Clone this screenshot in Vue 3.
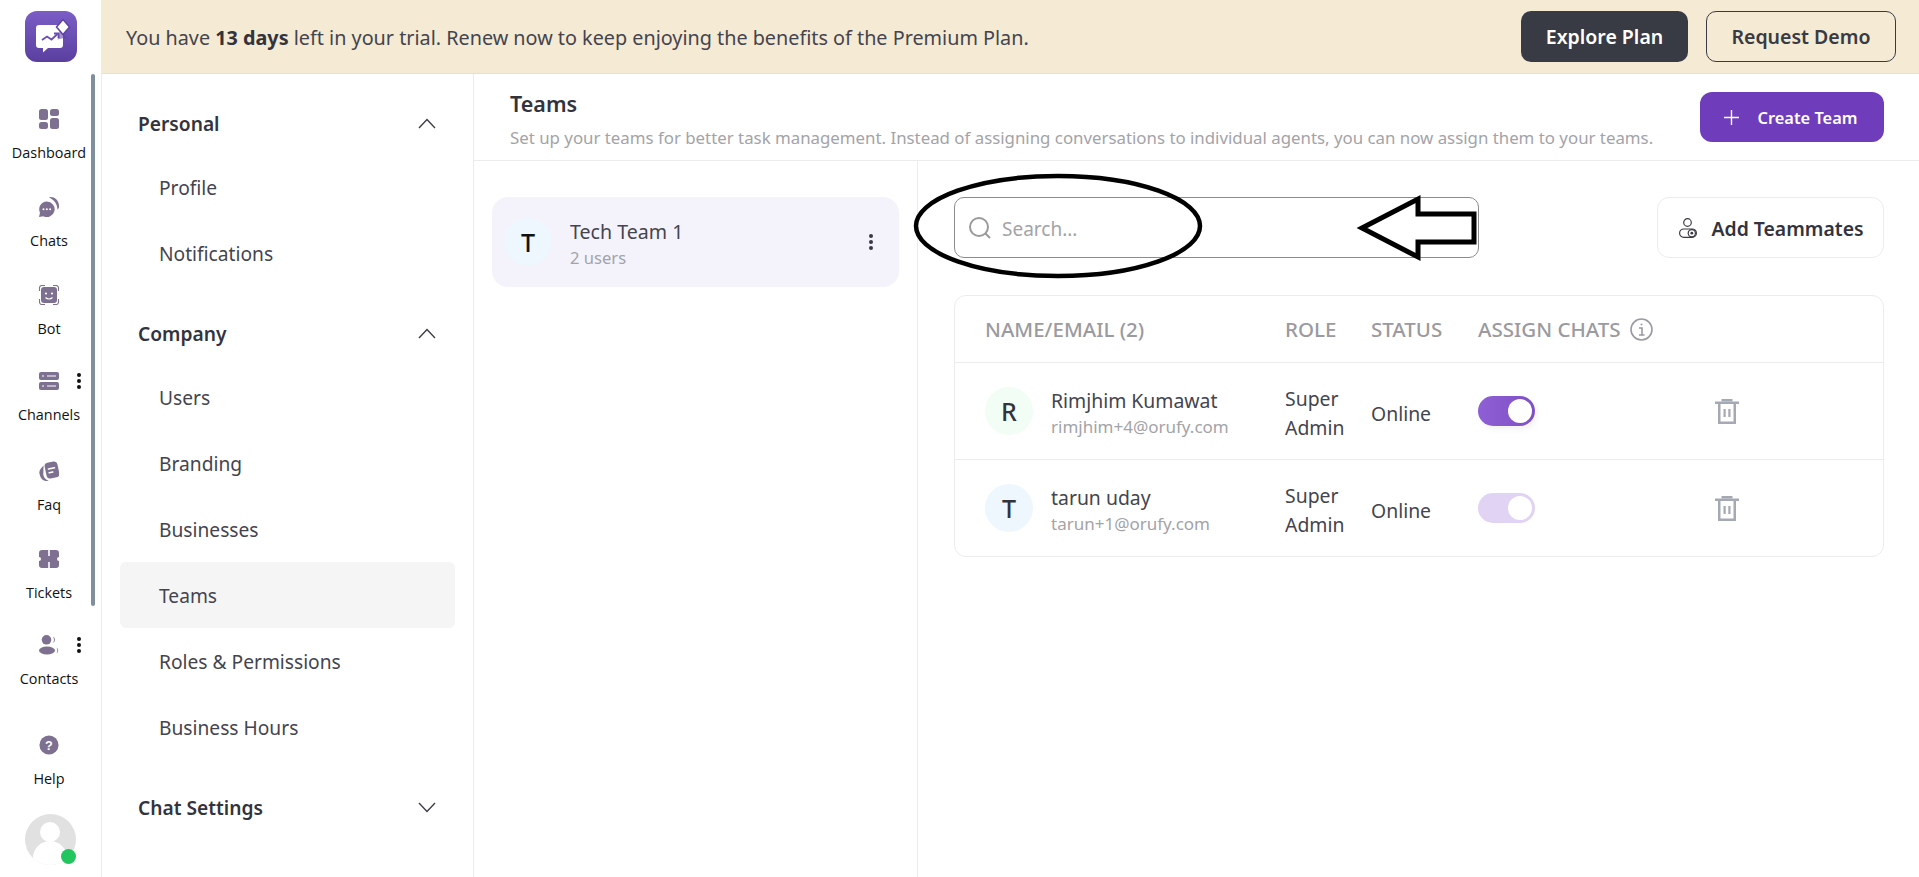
<script setup>
const navTop = [
  { label: 'Dashboard', h: 88, icon: 'dash' },
  { label: 'Chats', h: 88, icon: 'chat' },
  { label: 'Bot', h: 86, icon: 'bot' },
  { label: 'Channels', h: 90, icon: 'chan', more: true },
  { label: 'Faq', h: 88, icon: 'faq' },
  { label: 'Tickets', h: 86, icon: 'tick' },
  { label: 'Contacts', h: 100, icon: 'cont', more: true },
]
const sections = [
  { title: 'Personal', open: true, items: ['Profile', 'Notifications'] },
  { title: 'Company', open: true, items: ['Users', 'Branding', 'Businesses', 'Teams', 'Roles & Permissions', 'Business Hours'] },
  { title: 'Chat Settings', open: false, items: [] },
]
const members = [
  { initial: 'R', name: 'Rimjhim Kumawat', email: 'rimjhim+4@orufy.com', tone: 'green', on: true },
  { initial: 'T', name: 'tarun uday', email: 'tarun+1@orufy.com', tone: 'blue', on: false },
]
</script>

<template>
  <div class="page">
    <aside class="rail">
      <div class="logo">
        <svg width="52" height="51" viewBox="0 0 52 51">
          <path d="M14 14h21a3 3 0 0 1 3 3v17a3 3 0 0 1-3 3H23l-5 4.500V37h-4a3 3 0 0 1-3-3V17a3 3 0 0 1 3-3z" fill="#fff" />
          <path d="M17 29l5-3.500 4.500 3 6-5.500" fill="none" stroke="#6a4db4" stroke-width="1.800" />
          <path d="M29 22.500h4.500V27" fill="none" stroke="#6a4db4" stroke-width="1.800" />
          <path d="M35 19l6.500 7.500-9 2z" fill="#5a3f9f" opacity=".55" />
          <path d="M38 8.500l6.500 7.500-6.500 7.500-6.500-7.500z" fill="#fff" stroke="#5f43a8" stroke-width="1.500" />
        </svg>
      </div>
      <nav class="rail-nav">
        <div v-for="n in navTop" :key="n.label" class="rail-item" :style="{ height: n.h + 'px' }">
          <svg class="rail-icon" viewBox="2 2 20 20" fill="#7e7091">
            <g v-if="n.icon === 'dash'">
              <rect x="2" y="2" width="9" height="11" rx="2.500" /><rect x="13" y="2" width="9" height="7" rx="2.500" />
              <rect x="2" y="15" width="9" height="7" rx="2.500" /><rect x="13" y="11" width="9" height="11" rx="2.500" />
            </g>
            <g v-else-if="n.icon === 'chat'">
              <path d="M12 2.200c5.500-1 10.500 3.500 10 10-.2 1-.7 1.800-1.500 2.500C20.500 9.500 17.500 5 12 2.200z" />
              <path d="M9.800 6.500a7.800 7.800 0 1 1-3.400 14.800L2 22l1-4.200A7.800 7.800 0 0 1 9.800 6.500z" />
              <circle cx="6.500" cy="14.300" r="1" fill="#fff" /><circle cx="9.800" cy="14.300" r="1" fill="#fff" /><circle cx="13.100" cy="14.300" r="1" fill="#fff" />
            </g>
            <g v-else-if="n.icon === 'bot'">
              <rect x="4" y="4" width="16" height="16" rx="3" />
              <path d="M2.500 8V5a2.500 2.500 0 0 1 2.500-2.500h3M16 2.500h3A2.500 2.500 0 0 1 21.500 5v3M21.500 16v3a2.500 2.500 0 0 1-2.500 2.500h-3M8 21.500H5A2.500 2.500 0 0 1 2.500 19v-3" fill="none" stroke="#7e7091" stroke-width="1.100" />
              <circle cx="9" cy="10.500" r="1.100" fill="#fff" /><circle cx="15" cy="10.500" r="1.100" fill="#fff" />
              <path d="M8.500 14.500c2 1.800 5 1.800 7 0" fill="none" stroke="#fff" stroke-width="1.200" />
            </g>
            <g v-else-if="n.icon === 'chan'">
              <rect x="2" y="3" width="20" height="8" rx="2" /><rect x="2" y="13" width="20" height="8" rx="2" />
              <path d="M5 7h2M10 7h9M5 17h2M10 17h9" stroke="#fff" stroke-width="1.200" />
            </g>
            <g v-else-if="n.icon === 'faq'">
              <rect x="8.500" y="3" width="13" height="16" rx="3.500" transform="rotate(-12 15 11)" />
              <path d="M6.500 6.500L3.500 10c-1 1.400-1.400 3-1 4.700l.7 2.600c.8 2.500 3 4.300 5.600 4.700l4 .5c-3.500-1.500-6-3.500-6.500-7z" />
              <path d="M11.500 10l6-1.300M12.200 13.800l3.600-.8" stroke="#fff" stroke-width="1.600" stroke-linecap="round" />
            </g>
            <g v-else-if="n.icon === 'tick'">
              <path d="M5 3h6.200v6h1.600V3H19a3 3 0 0 1 3 3v4a2 2 0 0 0 0 4v4a3 3 0 0 1-3 3h-6.200v-6h-1.600v6H5a3 3 0 0 1-3-3v-4a2 2 0 0 0 0-4V6a3 3 0 0 1 3-3z" />
            </g>
            <g v-else>
              <circle cx="9.500" cy="6.800" r="4.800" /><ellipse cx="10" cy="17.500" rx="8" ry="4" />
              <path d="M16 3.500a3.800 3.800 0 0 1 0 6.600 6.500 6.500 0 0 0 0-6.600zM19.500 14.500a3.500 3.500 0 0 1 0 6 6 6 0 0 0 0-6z" />
            </g>
          </svg>
          <svg v-if="n.more" class="kebab" width="6" height="18" viewBox="0 0 6 18" fill="#111">
            <circle cx="3" cy="3" r="2" /><circle cx="3" cy="9" r="2" /><circle cx="3" cy="15" r="2" />
          </svg>
          <span class="rail-label">{{ n.label }}</span>
        </div>
        <div class="rail-item help">
          <svg class="rail-icon" viewBox="0 0 22 22">
            <circle cx="11" cy="11" r="10.500" fill="#7e7091" />
            <text x="11" y="16" text-anchor="middle" font-size="14" font-weight="700" fill="#fff" font-family="'Liberation Sans', sans-serif">?</text>
          </svg>
          <span class="rail-label">Help</span>
        </div>
      </nav>
      <div class="me">
        <svg width="51" height="51" viewBox="0 0 51 51">
          <defs><clipPath id="clipMe"><circle cx="25.500" cy="25.500" r="25.500" /></clipPath></defs>
          <circle cx="25.500" cy="25.500" r="25.500" fill="#e1e1e1" />
          <g clip-path="url(#clipMe)" fill="#fff">
            <circle cx="25" cy="18" r="10" /><ellipse cx="25" cy="44" rx="17" ry="17" />
          </g>
        </svg>
        <span class="me-dot"></span>
      </div>
      <span class="rail-scroll"></span>
    </aside>

    <div class="right">
      <header class="banner">
        <p class="banner-text">You have <b>13 days</b> left in your trial. Renew now to keep enjoying the benefits of the Premium Plan.</p>
        <button class="btn-dark">Explore Plan</button>
        <button class="btn-outline">Request Demo</button>
      </header>

      <div class="work">
        <aside class="settings">
          <section v-for="s in sections" :key="s.title" class="set-sec">
            <div class="set-head">
              <span>{{ s.title }}</span>
              <svg width="18" height="11" viewBox="0 0 18 11" fill="none" stroke="#3a3a44" stroke-width="1.300">
                <path v-if="s.open" d="M1 10l8-8.500 8 8.500" /><path v-else d="M1 1l8 8.500L17 1" />
              </svg>
            </div>
            <div v-for="i in s.items" :key="i" class="set-item" :class="{ active: i === 'Teams' }">{{ i }}</div>
          </section>
        </aside>

        <main class="main">
          <div class="main-head">
            <div>
              <h1>Teams</h1>
              <p>Set up your teams for better task management. Instead of assigning conversations to individual agents, you can now assign them to your teams.</p>
            </div>
            <button class="btn-primary">
              <svg width="15" height="15" viewBox="0 0 15 15" stroke="#fff" stroke-width="1.400"><path d="M7.500 0v15M0 7.500h15" /></svg>
              Create Team
            </button>
          </div>
          <div class="main-body">
            <div class="teams">
              <div class="team-card">
                <span class="avatar blue dark">T</span>
                <div class="team-info">
                  <div class="team-name">Tech Team 1</div>
                  <div class="team-sub">2 users</div>
                </div>
                <svg width="6" height="18" viewBox="0 0 6 18" fill="#3a3a44">
                  <circle cx="3" cy="3" r="2" /><circle cx="3" cy="9" r="2" /><circle cx="3" cy="15" r="2" />
                </svg>
              </div>
            </div>
            <div class="detail">
              <div class="tools">
                <div class="search">
                  <svg width="26" height="26" viewBox="0 0 26 26" fill="none" stroke="#9a9a9a" stroke-width="2">
                    <circle cx="12" cy="12" r="9" /><path d="M18.500 18.500l4.500 4.500" />
                  </svg>
                  <span>Search...</span>
                </div>
                <button class="btn-add">
                  <svg width="18" height="20" viewBox="0 0 18 20" fill="none" stroke="#3a3a44" stroke-width="1.200">
                    <circle cx="8.500" cy="4.500" r="3.800" /><rect x="0.600" y="11" width="16.800" height="8.400" rx="4.200" />
                    <circle cx="12.800" cy="15.200" r="3.600" fill="#fff" /><circle cx="12.800" cy="15.200" r="1.400" fill="#3a3a44" stroke="none" />
                  </svg>
                  <span>Add Teammates</span>
                </button>
              </div>
              <div class="table">
                <div class="row head">
                  <span>NAME/EMAIL (2)</span><span>ROLE</span><span>STATUS</span>
                  <span class="assign">ASSIGN CHATS
                    <svg width="23" height="23" viewBox="0 0 23 23" fill="none" stroke="#9a9aa0" stroke-width="1.600">
                      <circle cx="11.500" cy="11.500" r="10.500" /><path d="M9 10h3v7M9 17h5.500" /><circle cx="11.500" cy="6.500" r="1" fill="#9a9aa0" stroke="none" />
                    </svg>
                  </span>
                </div>
                <div v-for="m in members" :key="m.email" class="row body">
                  <div class="who">
                    <span class="avatar" :class="m.tone">{{ m.initial }}</span>
                    <div class="who-text">
                      <div class="who-name">{{ m.name }}</div>
                      <div class="who-mail">{{ m.email }}</div>
                    </div>
                  </div>
                  <div class="role">Super<br />Admin</div>
                  <div class="status">Online</div>
                  <div class="ctrl">
                    <span class="toggle" :class="{ off: !m.on }"><i></i></span>
                    <svg class="trash" width="24" height="25" viewBox="0 0 24 25" fill="#a5a9b4">
                      <rect x="6.500" y="0" width="11" height="2.500" />
                      <rect x="0" y="2.500" width="24" height="2.500" />
                      <path d="M3 5h2.500v17.500h13V5H21v20H3z" />
                      <rect x="8.500" y="10" width="2.200" height="8" /><rect x="13.300" y="10" width="2.200" height="8" />
                    </svg>
                  </div>
                </div>
              </div>
            </div>
          </div>
        </main>
      </div>
    </div>

    <svg class="mark" width="1919" height="877" viewBox="0 0 1919 877" fill="none" stroke="#000" stroke-width="4.500">
      <ellipse cx="1058" cy="226" rx="142" ry="50" />
      <path d="M1362 228l56-29v15h56v28h-56v15z" stroke-width="5" />
    </svg>
  </div>
</template>

<style>
html, body { margin: 0; padding: 0; background: #fff; overflow: hidden; }
</style>

<style scoped>
.page { position: relative; display: flex; width: 1919px; height: 877px; overflow: hidden; font-family: "Noto Sans", "Open Sans", sans-serif; color: #33333d; background: #fff; }
button { font-family: inherit; cursor: pointer; }

.rail { position: relative; box-sizing: content-box; flex: 0 0 98px; width: 98px; border-right: 1px solid #ececec; display: flex; flex-direction: column; align-items: center; padding-right: 3px; }
.logo { width: 52px; height: 51px; margin: 11px 0 0 3px; border-radius: 12px; background: linear-gradient(180deg, #7b5dc6, #5a3f9f); }
.logo svg { display: block; }
.rail-nav { margin-top: 47px; display: flex; flex-direction: column; width: 100%; }
.rail-item { position: relative; display: flex; flex-direction: column; align-items: center; }
.rail-icon { height: 20px; width: 20px; flex: none; }
.rail-label { margin-top: 14px; font-size: 14.400px; line-height: 20px; color: #111; font-family: "Open Sans", sans-serif; }
.kebab { position: absolute; left: 76px; top: 1px; }
.me { position: relative; width: 51px; height: 51px; margin: 25px 0 0 3px; }
.me svg { display: block; }
.me-dot { position: absolute; left: 36px; top: 35px; width: 15px; height: 15px; border-radius: 50%; background: #22c55e; }
.rail-scroll { position: absolute; left: 91px; top: 74px; width: 4px; height: 532px; border-radius: 2px; background: #7f8fa0; }

.right { flex: 1; min-width: 0; display: flex; flex-direction: column; }
.banner { height: 73px; flex: none; display: flex; align-items: center; padding: 0 23px 0 24px; background: #f5ead3; border-bottom: 1px solid #ebdfc4; gap: 18px; }
.banner-text { flex: 1; margin: 2px 0 0; font-size: 19.800px; color: #44444e; }
.banner-text b { color: #33333d; }
.btn-dark { width: 167px; height: 51px; border: 0; border-radius: 10px; background: #383a44; color: #fff; font-size: 19.500px; font-weight: 600; }
.btn-outline { width: 190px; height: 51px; border: 1px solid #383a44; border-radius: 10px; background: transparent; color: #383a44; font-size: 19.500px; font-weight: 600; }

.work { flex: 1; display: flex; min-height: 0; }
.settings { flex: 0 0 372px; box-sizing: border-box; border-right: 1px solid #ececec; padding: 19px 18px 0; }
.set-head { height: 61px; display: flex; align-items: center; justify-content: space-between; padding: 0 19px 0 18px; font-size: 19.200px; font-weight: 600; }
.set-item { height: 66px; display: flex; align-items: center; padding-left: 39px; font-size: 19.200px; color: #44444e; border-radius: 6px; }
.set-item.active { background: #f5f5f5; }
.set-sec:nth-child(2) { margin-top: 17px; }
.set-sec:nth-child(3) { margin-top: 17px; }

.main { flex: 1; min-width: 0; display: flex; flex-direction: column; }
.main-head { height: 87px; flex: none; box-sizing: border-box; border-bottom: 1px solid #ececec; display: flex; justify-content: space-between; padding: 15px 35px 0 36px; }
.main-head h1 { margin: 0; font-size: 21.500px; line-height: 30px; font-weight: 600; }
.main-head p { margin: 7px 0 0; font-size: 16.840px; line-height: 24px; color: #a3a3a8; white-space: nowrap; }
.btn-primary { width: 184px; height: 50px; margin-top: 3px; border: 0; border-radius: 12px; background: #6f3dbb; color: #fff; font-size: 16.400px; font-weight: 600; display: flex; align-items: center; justify-content: center; gap: 18px; padding-left: 4px; }

.main-body { flex: 1; display: flex; min-height: 0; }
.teams { flex: 0 0 444px; box-sizing: border-box; border-right: 1px solid #ececec; padding: 36px 18px 0; }
.team-card { height: 90px; display: flex; align-items: center; gap: 18px; padding: 0 25px 0 12px; border-radius: 16px; background: #f4f3fc; }
.team-info { flex: 1; padding-top: 4px; }
.team-name { font-size: 19.600px; line-height: 28px; color: #44444e; }
.team-sub { font-size: 16.600px; line-height: 24px; color: #a3a3a8; }
.avatar { width: 48px; height: 48px; flex: none; border-radius: 50%; display: flex; align-items: center; justify-content: center; font-size: 25px; font-weight: 500; color: #33333d; }
.avatar.green { background: #f2fdf6; }
.avatar.blue { background: #eef6fe; }
.avatar.dark { color: #111; }

.detail { flex: 1; min-width: 0; padding: 36px 35px 0 36px; }
.tools { display: flex; justify-content: space-between; }
.search { width: 525px; height: 61px; box-sizing: border-box; border: 1px solid #8c8c8c; border-radius: 10px; display: flex; align-items: center; gap: 9px; padding-left: 12px; font-size: 19px; color: #a3a3a8; }
.search span { padding-top: 2px; }
.btn-add { width: 227px; height: 61px; border: 1px solid #ececec; border-radius: 12px; background: #fff; color: #33333d; font-size: 19.400px; font-weight: 600; display: flex; align-items: center; justify-content: center; gap: 14px; padding-left: 8px; }
.btn-add span { padding-top: 2px; }
.table { margin-top: 37px; border: 1px solid #ececec; border-radius: 12px; }
.row { display: grid; grid-template-columns: 300px 86px 107px 1fr; align-items: center; padding-left: 30px; }
.row.head { height: 66px; font-size: 20.500px; font-weight: 500; color: #9a9aa0; }
.row.body { height: 96px; border-top: 1px solid #ececec; }
.assign { display: flex; align-items: center; gap: 9px; }
.who { display: flex; align-items: center; gap: 18px; }
.who-text { padding-top: 4px; }
.who-name { font-size: 19.400px; line-height: 28px; color: #44444e; }
.who-mail { font-size: 17px; line-height: 24px; color: #a3a3a8; }
.role, .status { font-size: 19.400px; line-height: 29px; color: #44444e; padding-top: 4px; }
.ctrl { display: flex; align-items: center; gap: 180px; }
.toggle { width: 57px; height: 30px; box-sizing: border-box; padding: 3px; border-radius: 15px; background: linear-gradient(90deg, #8f5fd6, #7f4fc4); display: flex; justify-content: flex-end; box-shadow: 2px 3px 6px rgba(0,0,0,.06); }
.toggle.off { background: #e0d3f3; box-shadow: none; }
.toggle i { width: 24px; height: 24px; border-radius: 50%; background: #fff; }
.mark { position: absolute; left: 0; top: 0; pointer-events: none; }
</style>
